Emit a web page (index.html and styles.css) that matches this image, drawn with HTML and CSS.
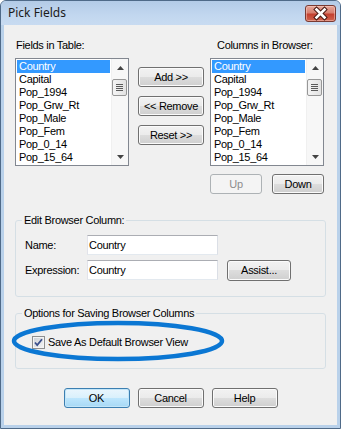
FILE: index.html
```html
<!DOCTYPE html>
<html>
<head>
<meta charset="utf-8">
<title>Pick Fields</title>
<link rel="stylesheet" href="styles.css">
</head>
<body>
<div class="window">
  <div class="titlebar">
    <span class="title">Pick Fields</span>
    <div class="close">
      <svg width="31" height="17" viewBox="0 0 31 17">
        <path d="M11.5 4.5 L19.5 12.5 M19.5 4.5 L11.5 12.5" stroke="#4a1a14" stroke-width="4.6" stroke-linecap="square" fill="none"/>
        <path d="M11.5 4.5 L19.5 12.5 M19.5 4.5 L11.5 12.5" stroke="#ffffff" stroke-width="2.6" stroke-linecap="square" fill="none"/>
      </svg>
    </div>
  </div>
  <div class="client">
    <div class="lists">
      <div class="col">
        <div class="label">Fields in Table:</div>
        <div class="listbox">
          <div class="items">
            <div class="item sel">Country</div>
            <div class="item">Capital</div>
            <div class="item">Pop_1994</div>
            <div class="item">Pop_Grw_Rt</div>
            <div class="item">Pop_Male</div>
            <div class="item">Pop_Fem</div>
            <div class="item">Pop_0_14</div>
            <div class="item">Pop_15_64</div>
          </div>
          <div class="scroll">
            <div class="arrow"><svg width="7" height="4" viewBox="0 0 7 4"><path d="M0 4 L3.5 0 L7 4 Z" fill="#444"/></svg></div>
            <div class="thumb"><span></span><span></span><span></span><span></span></div>
            <div class="track"></div>
            <div class="arrow"><svg width="7" height="4" viewBox="0 0 7 4"><path d="M0 0 L3.5 4 L7 0 Z" fill="#444"/></svg></div>
          </div>
        </div>
      </div>
      <div class="mid">
        <button class="btn btn-add">Add &gt;&gt;</button>
        <button class="btn btn-remove">&lt;&lt; Remove</button>
        <button class="btn btn-reset">Reset &gt;&gt;</button>
      </div>
      <div class="col">
        <div class="label label-right">Columns in Browser:</div>
        <div class="listbox">
          <div class="items">
            <div class="item sel">Country</div>
            <div class="item">Capital</div>
            <div class="item">Pop_1994</div>
            <div class="item">Pop_Grw_Rt</div>
            <div class="item">Pop_Male</div>
            <div class="item">Pop_Fem</div>
            <div class="item">Pop_0_14</div>
            <div class="item">Pop_15_64</div>
          </div>
          <div class="scroll">
            <div class="arrow"><svg width="7" height="4" viewBox="0 0 7 4"><path d="M0 4 L3.5 0 L7 4 Z" fill="#444"/></svg></div>
            <div class="thumb"><span></span><span></span><span></span><span></span></div>
            <div class="track"></div>
            <div class="arrow"><svg width="7" height="4" viewBox="0 0 7 4"><path d="M0 0 L3.5 4 L7 0 Z" fill="#444"/></svg></div>
          </div>
        </div>
      </div>
    </div>

    <div class="updown">
      <button class="btn btn-small disabled">Up</button>
      <button class="btn btn-small">Down</button>
    </div>

    <fieldset class="group group-edit">
      <legend>Edit Browser Column:</legend>
      <div class="group-body edit-body">
        <div class="row">
          <span class="flabel">Name:</span>
          <div class="input">Country</div>
        </div>
        <div class="row row-expr">
          <span class="flabel">Expression:</span>
          <div class="input">Country</div>
          <button class="btn btn-assist">Assist...</button>
        </div>
      </div>
    </fieldset>

    <fieldset class="group group-save">
      <legend>Options for Saving Browser Columns</legend>
      <div class="group-body save-body">
        <div class="checkrow">
          <div class="checkbox">
            <svg width="11" height="11" viewBox="0 0 11 11"><path d="M2 5.5 L4.2 8 L9 2.2" stroke="#3a4f8c" stroke-width="1.8" fill="none"/></svg>
          </div>
          <span class="checklabel">Save As Default Browser View</span>
        </div>
      </div>
    </fieldset>

    <div class="footer">
      <button class="btn btn-foot btn-default">OK</button>
      <button class="btn btn-foot">Cancel</button>
      <button class="btn btn-foot">Help</button>
    </div>
  </div>
  <svg class="annot" width="220" height="46" viewBox="0 0 220 46">
    <ellipse cx="108" cy="22" rx="104" ry="18" stroke="#0b77d3" stroke-width="4.5" fill="none"/>
  </svg>
</div>
</body>
</html>
```

FILE: styles.css
```css
html, body {
  margin: 0;
  padding: 0;
  background: #ffffff;
}

.window {
  position: relative;
  box-sizing: border-box;
  width: 341px;
  height: 429px;
  border: 1px solid #4f6a88;
  border-radius: 6px 6px 0 0;
  background: #b9d1ea;
  display: flex;
  flex-direction: column;
  overflow: hidden;
}

.titlebar {
  height: 24px;
  flex: none;
  display: flex;
  justify-content: space-between;
  align-items: flex-start;
  background: linear-gradient(#b3cbe7 0%, #c2d7ef 60%, #c8dbf1 100%);
}

.title {
  margin: 4px 0 0 7px;
  font: 12px/16px "Noto Sans", "Open Sans", sans-serif;
  color: #1a1a1a;
}

.close {
  margin: 4px 4px 0 0;
  width: 31px;
  height: 17px;
  box-sizing: border-box;
  border: 1px solid #7a3a32;
  border-radius: 3px;
  background: linear-gradient(#e6a699 0%, #d88070 45%, #c4402f 55%, #d0644f 100%);
  box-shadow: inset 0 0 0 1px rgba(255, 220, 210, 0.45);
  display: flex;
  align-items: center;
  justify-content: center;
}

.close svg {
  display: block;
  margin: -1px;
}

.client {
  flex: none;
  margin: 0 3px 3px 3px;
  height: 400px;
  box-sizing: border-box;
  background: #f0f0f0;
  padding: 14px 11px 0 11px;
  font: 11px "Liberation Sans", Arial, sans-serif;
  letter-spacing: -0.3px;
  color: #000;
  display: flex;
  flex-direction: column;
}

.lists {
  display: flex;
  align-items: flex-start;
}

.col {
  width: 114px;
  display: flex;
  flex-direction: column;
}

.label {
  line-height: 13px;
  height: 13px;
  padding-left: 1px;
  margin-bottom: 6px;
  white-space: nowrap;
}

.label-right {
  padding-left: 7px;
}

.listbox {
  box-sizing: border-box;
  width: 114px;
  height: 108px;
  border: 1px solid #828790;
  background: #ffffff;
  display: flex;
}

.items {
  flex: 1;
  padding: 1px;
}

.item {
  height: 13px;
  line-height: 13px;
  padding-left: 2px;
  white-space: nowrap;
}

.item.sel {
  background: #3399ff;
  color: #ffffff;
}

.scroll {
  width: 17px;
  display: flex;
  flex-direction: column;
  background: #f7f7f7;
  border-left: 1px solid #f0f0f0;
  box-sizing: border-box;
}

.arrow {
  height: 17px;
  flex: none;
  display: flex;
  align-items: center;
  justify-content: center;
}

.arrow svg {
  display: block;
}

.thumb {
  flex: none;
  margin: 3px 1px 0 0;
  height: 17px;
  box-sizing: border-box;
  border: 1px solid #979797;
  border-radius: 2px;
  background: linear-gradient(90deg, #f4f4f4, #e2e2e2);
  display: flex;
  flex-direction: column;
  align-items: center;
  justify-content: center;
  gap: 1px;
}

.thumb span {
  display: block;
  width: 7px;
  height: 1px;
  background: #5a5a5a;
}

.track {
  flex: 1;
}

.mid {
  width: 66px;
  margin: 28px 6px 0 9px;
  display: flex;
  flex-direction: column;
  gap: 9px;
}

.btn {
  box-sizing: border-box;
  height: 20px;
  padding: 0;
  margin: 0;
  border: 1px solid #707070;
  border-radius: 3px;
  background: linear-gradient(#f2f2f2 0%, #ebebeb 50%, #dddddd 50%, #cfcfcf 100%);
  box-shadow: inset 0 0 0 1px #fbfbfb;
  font: 11px/18px "Liberation Sans", Arial, sans-serif;
  letter-spacing: -0.3px;
  color: #000;
  text-align: center;
  white-space: nowrap;
}

.mid .btn {
  width: 66px;
}

.updown {
  margin-top: 8px;
  display: flex;
  justify-content: flex-end;
  gap: 10px;
  padding-right: 2px;
}

.btn-small {
  width: 52px;
}

.btn.disabled {
  border-color: #adb2b5;
  background: #f4f4f4;
  box-shadow: none;
  color: #8d8d8d;
}

.group {
  margin: 0;
  padding: 0;
  border: 1px solid #d5dfe5;
  border-radius: 3px;
  min-inline-size: 0;
}

.group legend {
  margin-left: 6px;
  padding: 0 2px;
  line-height: 13px;
  height: 13px;
}

.group-edit {
  margin-top: 20px;
}

.edit-body {
  padding: 8px 9px 16px 9px;
}

.row {
  display: flex;
  align-items: center;
  height: 20px;
}

.row-expr {
  margin-top: 5px;
}

.flabel {
  width: 62px;
  line-height: 13px;
}

.input {
  box-sizing: border-box;
  width: 131px;
  height: 20px;
  border: 1px solid #abadb3;
  border-left-color: #e2e3ea;
  border-right-color: #dbdfe6;
  border-bottom-color: #e3e9ef;
  background: #ffffff;
  padding-left: 1px;
  line-height: 18px;
}

.btn-assist {
  width: 64px;
  height: 21px;
  margin-left: 9px;
  line-height: 19px;
}

.group-save {
  margin-top: 10px;
}

.save-body {
  padding: 16px 16px 19px 16px;
}

.checkrow {
  display: flex;
  align-items: center;
  height: 13px;
}

.checkbox {
  box-sizing: border-box;
  width: 13px;
  height: 13px;
  border: 1px solid #8e8f8f;
  background: linear-gradient(135deg, #cbcfd5, #f6f6f6);
  box-shadow: inset 0 0 0 1px #f4f4f4;
  display: flex;
  align-items: center;
  justify-content: center;
}

.checkbox svg {
  display: block;
}

.checklabel {
  margin-left: 3px;
  line-height: 13px;
}

.footer {
  margin-top: 19px;
  display: flex;
  justify-content: center;
  gap: 8px;
}

.btn-foot {
  width: 66px;
}

.btn-default {
  border-color: #3c7fb1;
  background: linear-gradient(#eaf6fd 0%, #d9f0fc 50%, #bee6fd 50%, #a7d9f5 100%);
  box-shadow: inset 0 0 0 1px #c3e6f9;
}

.annot {
  position: absolute;
  left: 9px;
  top: 318px;
  pointer-events: none;
}
```
